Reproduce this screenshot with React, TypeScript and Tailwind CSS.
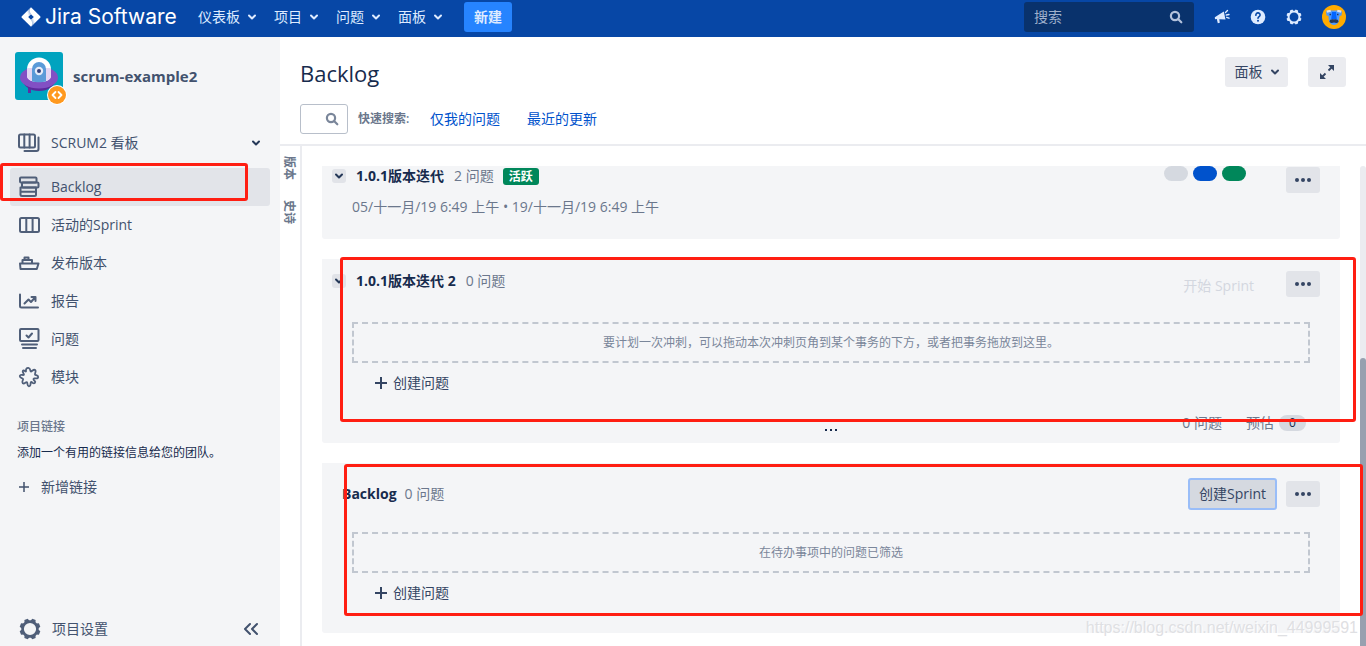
import React, { ReactNode } from 'react'

const FONT = "font-['Open_Sans','Noto_Sans_CJK_SC',sans-serif]"

function Chevron({ className = '' }: { className?: string }) {
    return (
        <svg viewBox="0 0 8 6" className={`w-2 h-1.5 shrink-0 ${className}`} fill="none" stroke="currentColor" strokeWidth="2" strokeLinecap="round" strokeLinejoin="round" aria-hidden="true">
            <path d="M1 1.5l3 3 3-3" />
        </svg>
    )
}

function SearchIcon({ className = '' }: { className?: string }) {
    return (
        <svg viewBox="0 0 14 14" className={`w-3.5 h-3.5 shrink-0 ${className}`} fill="none" stroke="currentColor" strokeWidth="2.2" strokeLinecap="round" aria-hidden="true">
            <circle cx="6" cy="6" r="4.1" />
            <path d="M9.3 9.3l3 3" />
        </svg>
    )
}

function GearIcon({ className = '' }: { className?: string }) {
    const teeth = [0, 45, 90, 135, 180, 225, 270, 315]
    return (
        <svg viewBox="0 0 22 22" className={`shrink-0 ${className}`} aria-hidden="true">
            <circle cx="11" cy="11" r="7.4" fill="none" stroke="currentColor" strokeWidth="2.6" />
            {teeth.map((a) => (
                <path key={a} d="M8.2 3.6L9.2 .6h3.6l1 3z" fill="currentColor" transform={`rotate(${a + 22.5} 11 11)`} />
            ))}
        </svg>
    )
}

function JiraLogo() {
    return (
        <svg viewBox="0 0 20 20" className="w-5 h-5 shrink-0" aria-hidden="true">
            <defs>
                <linearGradient id="jiraTop" x1="1" y1="0.2" x2="0.3" y2="0.7">
                    <stop offset="0.1" stopColor="#0747a6" stopOpacity="0.55" />
                    <stop offset="1" stopColor="#0747a6" stopOpacity="0" />
                </linearGradient>
                <linearGradient id="jiraBottom" x1="0" y1="0.8" x2="0.7" y2="0.3">
                    <stop offset="0.1" stopColor="#0747a6" stopOpacity="0.5" />
                    <stop offset="1" stopColor="#0747a6" stopOpacity="0" />
                </linearGradient>
            </defs>
            <path d="M10 .3l9.2 9a1 1 0 010 1.4L10 19.7.8 10.7a1 1 0 010-1.4z" fill="#fff" />
            <path d="M10 .3c-1.7 1.9-1.7 4.6 0 6.5L7 9.8 5.2 5z" fill="url(#jiraTop)" />
            <path d="M10 19.7c1.7-1.9 1.7-4.6 0-6.5l3-3 1.8 4.8z" fill="url(#jiraBottom)" />
            <path d="M10 7.2l2.8 2.8-2.8 2.8L7.2 10z" fill="#0747a6" />
        </svg>
    )
}

function ProjectAvatar() {
    return (
        <svg viewBox="0 0 52 53" className="w-[52px] h-[53px] shrink-0" role="img" aria-label="scrum-example2">
            <rect width="48" height="48" rx="3" fill="#00a3bf" />
            <path d="M13 33h3v8h-3z" fill="#5e2ca5" />
            <ellipse cx="24" cy="28" rx="16" ry="11" fill="#5a2a9c" />
            <ellipse cx="24" cy="25.5" rx="19" ry="11" fill="#8250c4" />
            <path d="M12 17.5a12 12 0 0124 0V24c0 3-4 6-12 6s-12-3-12-6z" fill="#fff" />
            <path d="M12 16h24v8c0 3-4 6-12 6s-12-3-12-6z" fill="#e3d6f3" />
            <path d="M17 17a7 7 0 0114 0v12.5c-4 1-10 1-14 0z" fill="#5b9bd8" />
            <circle cx="24" cy="19" r="4.2" fill="#e6ecf8" />
            <circle cx="24" cy="19" r="2" fill="#33427d" />
            <circle cx="42" cy="43" r="10" fill="#fff" />
            <circle cx="42" cy="43" r="9" fill="#ff991f" />
            <path d="M40.5 40l-3 3 3 3M43.5 40l3 3-3 3" fill="none" stroke="#fff" strokeWidth="1.8" strokeLinecap="round" strokeLinejoin="round" />
        </svg>
    )
}

function MenuSvg({ children }: { children: ReactNode }) {
    return (
        <svg viewBox="0 0 22 22" className="w-[22px] h-[22px] shrink-0 text-[#505f79]" fill="none" stroke="currentColor" strokeWidth="2" strokeLinecap="round" strokeLinejoin="round" aria-hidden="true">
            {children}
        </svg>
    )
}

const menuItems = [
    {
        label: '活动的Sprint',
        icon: <><rect x="2" y="4" width="19" height="14" rx="1.5" /><path d="M8.3 4v14M14.6 4v14" /></>
    },
    {
        label: '发布版本',
        icon: <path d="M2 11.5h18.5L18.8 17H2.5zM4.500 11.500V8H14v3.500M6.500 8V5.500h4V8" />
    },
    {
        label: '报告',
        icon: <path d="M2 4.5V16a1.5 1.5 0 001.5 1.5H20M6.500 13.500l4-4L13 12l4-4.500M13.500 7h4v4" />
    },
    {
        label: '问题',
        icon: <><rect x="2" y="1" width="18.5" height="12" rx="1" /><path d="M8.5 7.5l2 2L14 5.500M4 16.500h15M5 20h13" /></>
    },
    {
        label: '模块',
        icon: <path d="M8 5.5C7.600 3.200 8.600 1.600 10.400 1.800C12.600 2 12 4.500 12.600 5.300C13.600 6.300 14.800 3.300 16.800 3.800C18.900 4.600 16.600 7.300 17 8.500C17.500 9.500 20.200 8.900 20.200 11C20.100 13.200 17.500 12.200 16.200 12.300C14.800 12.800 15.600 14.200 16.700 15C18 16.200 16.500 18 14.800 17C13.700 16.200 13.200 15.300 12.700 16.700C12.500 18 12.800 20.400 10.900 20.300C8.900 20.100 9.800 17.300 9 16.300C7.800 15.500 6.700 18.300 4.700 17.300C3.200 16.100 5.400 14.300 5.100 13C4.600 11.800 1.900 12.300 1.800 10.200C2 8 4.500 9.400 5.800 8.900C6.800 8.200 4 6.300 4.800 4.900C5.700 3.500 7.200 5.800 8 5.500z" strokeWidth="1.8" />
    }
]

const navItems = ['仪表板', '项目', '问题', '面板']

function RedFrame({ className }: { className: string }) {
    return <div className={`absolute z-10 border-3 border-[#ff1e12] rounded-[3px] pointer-events-none ${className}`} />
}

function DotsButton() {
    return (
        <button aria-label="更多" className="w-[34px] h-[26px] shrink-0 bg-[#e2e4e9] rounded-[3px] flex items-center justify-center gap-[2px]">
            <span className="w-1 h-1 rounded-full bg-[#344563]" />
            <span className="w-1 h-1 rounded-full bg-[#344563]" />
            <span className="w-1 h-1 rounded-full bg-[#344563]" />
        </button>
    )
}

function ToggleButton() {
    return (
        <button aria-label="折叠" className="w-3.5 h-3.5 bg-[#e1e3e8] rounded-[3px] flex items-center justify-center mr-2.5 text-[#253858]">
            <Chevron />
        </button>
    )
}

function DropZone({ children }: { children: ReactNode }) {
    return (
        <div className="h-[41px] border-2 border-dashed border-[#c1c7d0] flex items-center justify-center text-xs text-[#7a869a]">
            {children}
        </div>
    )
}

function CreateIssue() {
    return (
        <button className="mt-2.5 ml-[23px] h-5 flex items-center gap-1.5 text-[#344563]">
            <svg viewBox="0 0 12 12" className="w-3 h-3" stroke="currentColor" strokeWidth="2" aria-hidden="true">
                <path d="M6 0v12M0 6h12" />
            </svg>
            创建问题
        </button>
    )
}

function Header() {
    return (
        <header className="h-[37px] pb-[3px] pl-[21px] pr-5 bg-[#0747a6] text-[#deebff] flex items-center">
            <a href="#" className="flex items-center gap-1 text-white">
                <JiraLogo />
                <span className="w-[133px] font-['Inter',sans-serif] text-[21px] leading-6 whitespace-nowrap">Jira Software</span>
            </a>
            <nav className="flex items-center gap-[18px] ml-5">
                {navItems.map((item) => (
                    <button key={item} className="flex items-center gap-2">
                        {item}
                        <Chevron />
                    </button>
                ))}
            </nav>
            <button className="ml-[22px] w-12 h-[30px] rounded-[3px] bg-[#2684ff] font-bold">新建</button>
            <div className="ml-auto w-[170px] h-[30px] rounded-[3px] bg-[#09326c] flex items-center pl-2.5 pr-[11px]">
                <input type="text" aria-label="搜索" placeholder="搜索" className="min-w-0 flex-1 bg-transparent outline-none placeholder:text-[#9fb0cc]" />
                <SearchIcon className="text-[#b3c2dc]" />
            </div>
            <div className="flex items-center gap-5 ml-5">
                <button aria-label="反馈">
                    <svg viewBox="0 0 16 16" className="w-4 h-4" aria-hidden="true">
                        <path d="M.8 8.2L9.8 2.5l1.7 8-6.2-.3.5 3.6-2 .5-1-4.2L1 10.2z" fill="currentColor" />
                        <path d="M11.5 3.5l2-2M12.3 6l2.7-.5M12.7 8.3l2.3.9" fill="none" stroke="currentColor" strokeWidth="1.4" strokeLinecap="round" />
                    </svg>
                </button>
                <button aria-label="帮助">
                    <svg viewBox="0 0 16 16" className="w-4 h-4" aria-hidden="true">
                        <circle cx="8" cy="8" r="7.3" fill="currentColor" />
                        <path d="M5.9 6.3a2.1 2.1 0 114 .5c-.4.9-1.8 1-1.9 2.400" fill="none" stroke="#0747a6" strokeWidth="1.6" strokeLinecap="round" />
                        <circle cx="8" cy="11.7" r="1" fill="#0747a6" />
                    </svg>
                </button>
                <button aria-label="设置"><GearIcon className="w-4 h-4" /></button>
            </div>
            <button aria-label="用户" className="ml-5">
                <svg viewBox="0 0 24 24" className="w-6 h-6" aria-hidden="true">
                    <circle cx="12" cy="12" r="12" fill="#ffab00" />
                    <path d="M4 6.5l4-1h8l4 1-.5 4-2 .5c0 5-1.5 9-5.5 9s-5.5-4-5.5-9l-2-.5z" fill="#4c9aff" />
                    <path d="M4.5 5.5l4-.8.5 2-4 1zM19.5 5.5l-4-.8-.5 2 4 1z" fill="#dfe1e6" />
                    <path d="M10 7h4l.8 7H9.2z" fill="#0065ff" />
                    <path d="M7.5 17c0-2.5 2-3 4.5-2.5 2.5-.5 4.5 0 4.5 2.5-1.5 1.5-3 1-4.5.5-1.5.5-3 1-4.5-.5z" fill="#253858" />
                    <path d="M7.5 9.5h1.5M15 9.5h1.5" stroke="#253858" strokeWidth="1.5" />
                </svg>
            </button>
        </header>
    )
}

function Sidebar() {
    return (
        <aside className="w-[280px] shrink-0 bg-[#f4f5f7] flex flex-col text-[#42526e]">
            <div className="pl-[15px] pt-[15px] flex gap-1.5">
                <ProjectAvatar />
                <div className="h-12 flex items-center text-[15px] font-bold">scrum-example2</div>
            </div>
            <nav className="px-2.5 mt-[19px]">
                <a href="#" className="h-[38px] px-2 flex items-center gap-[11px]">
                    <MenuSvg><rect x="1" y="2.5" width="16" height="13" rx="1.5" /><path d="M6.3 2.5v13M11.6 2.5v13M20.5 5.5V17a2 2 0 01-2 2H6.5" /></MenuSvg>
                    SCRUM2 看板
                    <Chevron className="ml-auto mr-0.5 text-[#253858]" />
                </a>
                <a href="#" className="relative mt-1.5 h-[38px] px-2 flex items-center gap-[11px] bg-[#e2e4e9] rounded-[3px] font-medium">
                    <MenuSvg><rect x="2" y="1.5" width="16.5" height="5" rx="1" /><rect x="4" y="6.5" width="16.5" height="5" rx="1" /><path d="M2.5 11.5H18v7a1.5 1.5 0 01-1.5 1.5H4a1.5 1.5 0 01-1.5-1.5zM2.5 15.7H18" /></MenuSvg>
                    Backlog
                    <RedFrame className="-left-2.5 right-[22px] -top-[5px] bottom-[5px]" />
                </a>
                {menuItems.map((item) => (
                    <a href="#" key={item.label} className="h-[38px] px-2 flex items-center gap-[11px]">
                        <MenuSvg>{item.icon}</MenuSvg>
                        {item.label}
                    </a>
                ))}
            </nav>
            <h2 className="mt-[21px] px-[17px] text-xs leading-5 font-medium text-[#6b778c]">项目链接</h2>
            <p className="mt-1.5 px-[17px] text-xs leading-5 text-[#172b4d]">添加一个有用的链接信息给您的团队。</p>
            <button className="mt-3.5 ml-[19px] h-5 flex items-center gap-3 self-start">
                <svg viewBox="0 0 10 10" className="w-2.5 h-2.5" stroke="currentColor" strokeWidth="1.5" aria-hidden="true">
                    <path d="M5 0v10M0 5h10" />
                </svg>
                新增链接
            </button>
            <div className="mt-auto mb-1.5 pl-[19px] pr-[21px] flex items-center">
                <a href="#" className="flex items-center gap-[11px]">
                    <GearIcon className="w-[22px] h-[22px] text-[#505f79]" />
                    项目设置
                </a>
                <button aria-label="收起" className="ml-auto">
                    <svg viewBox="0 0 16 14" className="w-4 h-3.5" fill="none" stroke="currentColor" strokeWidth="2" strokeLinecap="round" strokeLinejoin="round" aria-hidden="true">
                        <path d="M7 2L2 7l5 5M14 2L9 7l5 5" />
                    </svg>
                </button>
            </div>
        </aside>
    )
}

export default function App() {
    return (
        <div className={`min-h-screen flex flex-col bg-white text-sm leading-5 ${FONT}`}>
            <Header />
            <div className="flex-1 flex">
                <Sidebar />
                <main className="flex-1 min-w-0 flex flex-col">
                    <div className="pl-5 pr-5 pt-5 pb-2.5 border-b-2 border-[#ebecf0]">
                        <div className="flex items-start">
                            <h1 className="text-[22px] leading-8 text-[#172b4d] flex-1">Backlog</h1>
                            <button className="h-[30px] w-[63px] rounded-[3px] bg-[#ebecf0] text-[#344563] flex items-center justify-center gap-2">
                                面板
                                <Chevron />
                            </button>
                            <button aria-label="全屏" className="ml-5 h-[30px] w-[38px] rounded-[3px] bg-[#ebecf0] text-[#344563] flex items-center justify-center">
                                <svg viewBox="0 0 14 14" className="w-3.5 h-3.5" aria-hidden="true">
                                    <path d="M8 0h6v6zM0 8v6h6z" fill="currentColor" />
                                    <path d="M8.5 5.5L12 2M5.5 8.5L2 12" stroke="currentColor" strokeWidth="1.8" />
                                </svg>
                            </button>
                        </div>
                        <div className="mt-[15px] flex items-center">
                            <label className="w-12 h-[30px] border border-[#b8bfca] rounded-[3px] flex items-center pr-2">
                                <input type="text" aria-label="搜索问题" className="min-w-0 flex-1 outline-none" />
                                <SearchIcon className="text-[#7a869a]" />
                            </label>
                            <span className="w-[52px] ml-2.5 text-xs leading-5 font-semibold text-[#6b778c] whitespace-nowrap">快速搜索:</span>
                            <a href="#" className="ml-5 text-[#0052cc]">仅我的问题</a>
                            <a href="#" className="ml-[27px] text-[#0052cc]">最近的更新</a>
                        </div>
                    </div>

                    <div className="flex-1 flex">
                        <div className="w-[22px] shrink-0 border-r-2 border-[#ebecf0] pt-2.5 flex flex-col items-start gap-5 text-xs leading-[18px] font-bold text-[#6b778c]">
                            <button className="[writing-mode:vertical-rl] [text-orientation:sideways]">版本</button>
                            <button className="[writing-mode:vertical-rl] [text-orientation:sideways]">史诗</button>
                        </div>

                        <div className="flex-1 min-w-0 px-5 pt-5 pb-[13px] flex flex-col gap-5">
                            <section className="bg-[#f4f5f7] rounded-b-[3px] pl-2.5 pr-5 pb-[22px]">
                                <div className="flex items-start">
                                    <div className="flex items-center h-5">
                                        <ToggleButton />
                                        <h2 className="font-bold text-[#172b4d]">1.0.1版本迭代</h2>
                                        <span className="ml-2.5 text-[#6b778c]">2 问题</span>
                                        <span className="ml-[9px] px-1.5 rounded-[3px] bg-[#00875a] text-white text-xs leading-[17px] font-bold">活跃</span>
                                    </div>
                                    <div className="ml-auto mr-10 flex gap-[5px]">
                                        <span className="w-6 h-[15px] rounded-full bg-[#d5d9e0]" />
                                        <span className="w-6 h-[15px] rounded-full bg-[#0052cc]" />
                                        <span className="w-6 h-[15px] rounded-full bg-[#00875a]" />
                                    </div>
                                    <div className="pt-px"><DotsButton /></div>
                                </div>
                                <div className="mt-1 pl-5 text-[#6b778c]">05/十一月/19 6:49 上午 • 19/十一月/19 6:49 上午</div>
                            </section>

                            <section className="relative bg-[#f4f5f7] rounded-b-[3px] pl-2.5 pr-5 pt-3 pb-2.5">
                                <div className="flex items-start">
                                    <div className="flex items-center h-5">
                                        <ToggleButton />
                                        <h2 className="font-bold text-[#172b4d]">1.0.1版本迭代 2</h2>
                                        <span className="ml-2.5 text-[#6b778c]">0 问题</span>
                                    </div>
                                    <button disabled className="ml-auto mr-8 mt-[5px] text-[#d3d7df]">开始 Sprint</button>
                                    <DotsButton />
                                </div>
                                <div className="pl-5 pr-2.5 mt-[25px]">
                                    <DropZone>要计划一次冲刺，可以拖动本次冲刺页角到某个事务的下方，或者把事务拖放到这里。</DropZone>
                                    <CreateIssue />
                                </div>
                                <div className="mt-5 pl-6 pr-3.5 grid grid-cols-[1fr_auto_1fr] items-center text-[#6b778c]">
                                    <span />
                                    <button aria-label="调整" className="mt-3.5 flex gap-[3px]">
                                        <span className="w-0.5 h-0.5 bg-[#172b4d]" />
                                        <span className="w-0.5 h-0.5 bg-[#172b4d]" />
                                        <span className="w-0.5 h-0.5 bg-[#172b4d]" />
                                    </button>
                                    <div className="flex items-center justify-end">
                                        <span>0 问题</span>
                                        <span className="ml-6">预估</span>
                                        <span className="ml-[5px] w-[27px] h-4 rounded-full bg-[#d5d9e0] text-[#172b4d] text-xs leading-4 text-center">0</span>
                                    </div>
                                </div>
                                <RedFrame className="left-[18px] -right-4 -top-0.5 bottom-[21px]" />
                            </section>

                            <section className="relative bg-[#f4f5f7] rounded-b-[3px] pl-5 pr-5 pt-[15px] pb-[30px]">
                                <div className="flex items-center">
                                    <h2 className="font-bold text-[#172b4d]">Backlog</h2>
                                    <span className="ml-2 text-[#6b778c]">0 问题</span>
                                    <button className="ml-auto mr-[9px] w-[89px] h-8 border-2 border-[#99bdf8] rounded-[3px] bg-[#d5d9e0] text-[#344563]">创建Sprint</button>
                                    <DotsButton />
                                </div>
                                <div className="pl-2.5 pr-2.5 mt-[22px]">
                                    <DropZone>在待办事项中的问题已筛选</DropZone>
                                    <CreateIssue />
                                </div>
                                <RedFrame className="left-[22px] -right-[23px] top-px bottom-[17px]" />
                                <div className="absolute -right-[18px] -bottom-[7px] z-10 font-['Liberation_Sans',sans-serif] text-base leading-6 text-[#dfe0e3] [text-shadow:1px_1px_0_#ffffff]">https://blog.csdn.net/weixin_44999591</div>
                            </section>
                        </div>

                        {/* scroll track */}
                        <div className="w-1.5 mt-5 rounded-t-full bg-[#ebecf0] flex flex-col">
                            <div className="flex-2" />
                            <div className="flex-3 rounded-t-full bg-[#97a0af]" />
                        </div>
                    </div>
                </main>
            </div>
        </div>
    )
}
